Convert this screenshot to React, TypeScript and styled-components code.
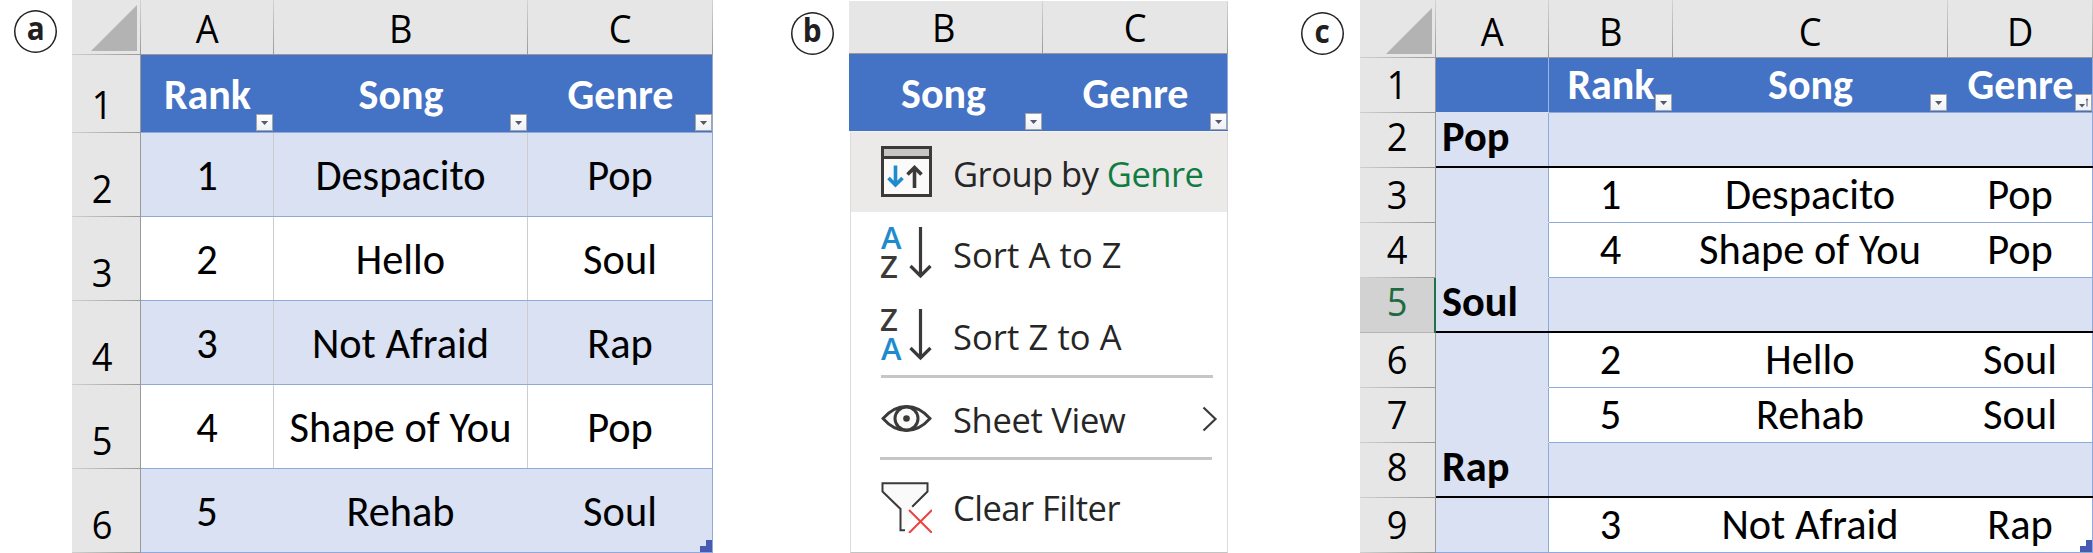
import React from "react";
import styled, { createGlobalStyle, css } from "styled-components";

const BLUE = "#4472c4";
const BAND = "#d9e1f2";
const RULE = "#8ea9db";
const HEAD = "#e6e6e6";
const EDGE = "#999999";

const Global = createGlobalStyle`
  *, *::before { box-sizing: border-box; }
  body { margin: 0; background: #fff; overflow: hidden; }
`;

const Page = styled.main`
  display: flex;
  align-items: flex-start;
  width: 2093px;
  height: 553px;
  overflow: hidden;
`;

const Badge = styled.div<{ $top: number; $left: number; $right: number; $lift: number }>`
  flex: none;
  width: 43px;
  height: 43px;
  margin: ${(p) => `${p.$top}px ${p.$right}px 0 ${p.$left}px`};
  padding-bottom: ${(p) => p.$lift}px;
  box-shadow: inset 0 0 0 1.5px #231f20;
  border-radius: 50%;
  display: flex;
  align-items: center;
  justify-content: center;
  font: 700 32px/32px "Open Sans", "Noto Sans", sans-serif;
  color: #231f20;
`;

const BadgeLetter = styled.span`
  display: block;
  transform: scaleX(0.93);
`;

const Sheet = styled.section<{ $cols: string; $rows: string }>`
  flex: none;
  display: grid;
  grid-template-columns: ${(p) => p.$cols};
  grid-template-rows: ${(p) => p.$rows};
`;

const Heading = styled.div`
  background: ${HEAD};
  display: flex;
  align-items: flex-end;
  justify-content: center;
  font: 400 39px/40px "Open Sans", "Noto Sans", sans-serif;
  color: #000;
`;

const Narrow = styled.span`
  display: block;
  transform: scaleX(0.93);
`;

const Corner = styled(Heading)<{ $pad: number }>`
  justify-content: flex-end;
  padding: 0 ${(p) => p.$pad}px 4px 0;
  background:
    linear-gradient(90deg, #cfcfcf, ${EDGE}) bottom / 100% 1px no-repeat,
    linear-gradient(#d4d4d4, ${EDGE}) right / 1px 100% no-repeat ${HEAD};
`;

const Triangle = styled.svg`
  display: block;
  width: 46px;
  height: 46px;
  fill: #b3b3b3;
`;

const ColHeading = styled(Heading)<{ $shift?: number }>`
  padding: 0 ${(p) => p.$shift ?? 1}px 7px 0;
  background:
    linear-gradient(${EDGE}, ${EDGE}) bottom / 100% 1px no-repeat,
    linear-gradient(#d4d4d4, ${EDGE}) right / 1px 100% no-repeat ${HEAD};
`;

const RowHeading = styled(Heading)<{ $shift?: number; $group?: boolean; $active?: boolean }>`
  padding-right: ${(p) => p.$shift ?? 0}px;
  padding-bottom: ${(p) => (p.$group ? 12 : 9)}px;
  border-right: 1px solid ${EDGE};
  background: linear-gradient(90deg, #cfcfcf, ${EDGE}) bottom / 100% 1px no-repeat ${HEAD};
  ${(p) =>
    p.$active &&
    css`
      color: #1e6b41;
      background: linear-gradient(#b4b4b4, #b4b4b4) bottom / 100% 1px no-repeat #d2d2d2;
      border-right: 2px solid #217346;
    `}
`;

const Cell = styled.div<{
  $base: number;
  $fill?: string;
  $right?: string;
  $bottom?: string;
  $thick?: boolean;
}>`
  position: relative;
  display: flex;
  align-items: flex-end;
  justify-content: center;
  background:
    linear-gradient(${(p) => p.$bottom ?? RULE} 0 0) bottom / 100% ${(p) => (p.$thick ? 2 : 1)}px no-repeat,
    linear-gradient(${(p) => p.$right ?? p.$fill ?? "#fff"} 0 0) right / 1px 100% no-repeat
    ${(p) => p.$fill ?? "#fff"};
  padding: 0 1px ${(p) => p.$base - 6}px 0;
  font: 400 42.4px/40px Calibri, Carlito, Lato, sans-serif;
  color: #000;
  white-space: nowrap;
`;

const HeaderCell = styled(Cell)<{ $shift?: number }>`
  padding-right: ${(p) => p.$shift ?? 0}px;
  font-size: 42px;
  font-weight: 700;
  color: #fff;
`;

const GroupCell = styled(Cell)`
  justify-content: flex-start;
  padding-left: 6px;
  font-weight: 700;
`;

const FilterButton = styled.span<{ $bottom: number }>`
  position: absolute;
  right: 1px;
  bottom: ${(p) => p.$bottom}px;
  width: 17px;
  height: 17px;
  border: 1px solid #a6a6a6;
  background: linear-gradient(#fff, #eef1f6);
  svg { display: block; width: 15px; height: 15px; }
`;

const Handle = styled.svg`
  position: absolute;
  right: 1px;
  bottom: 1px;
  width: 12px;
  height: 12px;
  fill: #485bb2;
`;

function Filter({ bottom = 2, sorted = false }: { bottom?: number; sorted?: boolean }) {
  return (
    <FilterButton $bottom={bottom}>
      <svg viewBox="0 0 15 15" fill="#555b66">
        {sorted ? (
          <>
            <path d="M3 9h6l-3 3.4z" />
            <path d="M10.5 4h1v7.500h-1zM9.500 5.200 11 3.200l1.500 2z" />
          </>
        ) : (
          <path d="M4 6h7.200L7.600 9.900z" />
        )}
      </svg>
    </FilterButton>
  );
}

const CornerMark = () => (
  <Triangle viewBox="0 0 46 46">
    <path d="M46 0V46H0z" />
  </Triangle>
);

const ResizeMark = () => (
  <Handle viewBox="0 0 12 12">
    <path d="M6 0h6v12H0V6h6z" />
  </Handle>
);

/* ---------- filter menu ---------- */

const MenuPanel = styled.section`
  flex: none;
  width: 379px;
  height: 553px;
  display: flex;
  flex-direction: column;
  padding-top: 1px;
`;

const Menu = styled.div`
  flex: 1;
  display: flex;
  flex-direction: column;
  margin: 0 0 0 1px;
  border: 1px solid #dcdcdc;
  border-top-color: #f3f3f3;
  border-bottom-color: #c3c3c3;
`;

const Item = styled.div<{ $h: number; $active?: boolean; $drop?: number; $foot?: number }>`
  flex: none;
  height: ${(p) => p.$h}px;
  display: flex;
  align-items: center;
  padding: ${(p) => p.$drop ?? 0}px 9px ${(p) => p.$foot ?? 0}px 30px;
  background: ${(p) => (p.$active ? "#ebeae9" : "transparent")};
  > svg { flex: none; display: block; }
`;

const Label = styled.span<{ $track?: number; $y?: number }>`
  flex: 1;
  margin: 0 0 0 21px;
  padding-top: ${(p) => p.$y ?? 0}px;
  font: 400 34.5px/44px "Open Sans", "Noto Sans", sans-serif;
  letter-spacing: ${(p) => p.$track ?? 0}px;
  white-space: nowrap;
  color: #262626;
  em { font-style: normal; color: #107c41; }
`;

const Divider = styled.hr<{ $left: number }>`
  flex: none;
  width: 332px;
  height: 3px;
  margin: 0 0 0 ${(p) => p.$left}px;
  border: 0;
  background: #c6c6c6;
`;

const INK = "#3b3a39";
const ACCENT = "#1e8bcd";

const GroupIcon = () => (
  <svg width="51" height="51" viewBox="0 0 51 51" fill="none">
    <rect x="1.500" y="1.500" width="48" height="48" fill="#fafafa" stroke={INK} strokeWidth="3" />
    <rect x="3" y="3" width="45" height="7" fill="#c8c6c4" />
    <path d="M2 11.500h47" stroke={INK} strokeWidth="3" />
    <path d="M14.500 19.500v19M7.500 32l7 7 7-7" stroke={ACCENT} strokeWidth="3.600" />
    <path d="M33.500 42V22M26.500 28.500l7-7 7 7" stroke={INK} strokeWidth="3.600" />
  </svg>
);

const SortSvg = styled.svg`
  overflow: visible;
`;

const Glyph = styled.text`
  font: 600 31px "Open Sans", "Noto Sans", sans-serif;
`;

function SortIcon({ first, second }: { first: "A" | "Z"; second: "A" | "Z" }) {
  const mark = (c: "A" | "Z", y: number) => (
    <Glyph x={c === "A" ? 0 : -1} y={y} fill={c === "A" ? ACCENT : INK}>
      {c}
    </Glyph>
  );
  return (
    <SortSvg width="51" height="51" viewBox="0 0 51 51" fill="none">
      {mark(first, 22.3)}
      {mark(second, 51)}
      <path d="M39.500 0v49M29.500 39l10 10 10-10" stroke={INK} strokeWidth="3.200" />
    </SortSvg>
  );
}

const EyeIcon = () => (
  <svg width="51" height="51" viewBox="0 0 51 51" fill="#fafafa" stroke={INK}>
    <path d="M2 25.500C16 9.500 35 9.500 49 25.500C35 41.500 16 41.500 2 25.500Z" strokeWidth="2.800" />
    <circle cx="25.500" cy="25.500" r="11.500" strokeWidth="3" />
    <circle cx="25.500" cy="25.500" r="3.300" fill={INK} stroke="none" />
  </svg>
);

const ClearIcon = () => (
  <svg width="51" height="51" viewBox="0 0 51 51" fill="none">
    <path d="M1 1.200H46.500V9.500L31 25v10l-7 13h-4.500V27L2 9.500z" fill="#fafafa" />
    <path d="M24 48.200H19.500V27L1.500 9.500V1.200H46.500V9.500L31.200 24.800" stroke={INK} strokeWidth="2" />
    <path d="M28 28l23 23M51 28 28 51" stroke="#f04040" strokeWidth="2" />
  </svg>
);

const Chevron = () => (
  <svg width="16" height="26" viewBox="0 0 16 26" fill="none" stroke={INK} strokeWidth="2.200">
    <path d="M1.500 1.500 13.500 13 1.500 24.500" />
  </svg>
);

/* ---------- data ---------- */

const SONGS = [
  ["1", "Despacito", "Pop"],
  ["2", "Hello", "Soul"],
  ["3", "Not Afraid", "Rap"],
  ["4", "Shape of You", "Pop"],
  ["5", "Rehab", "Soul"],
];

type GroupedRow = { group?: string; song?: string[] };
const GROUPED: GroupedRow[] = [
  { group: "Pop" },
  { song: SONGS[0] },
  { song: SONGS[3] },
  { group: "Soul" },
  { song: SONGS[1] },
  { song: SONGS[4] },
  { group: "Rap" },
  { song: SONGS[2] },
];

function PlainTable() {
  const titles = ["Rank", "Song", "Genre"];
  return (
    <Sheet $cols="69px 133px 254px 185px" $rows="55px 78px repeat(5, 84px)">
      <Corner $pad={4}><CornerMark /></Corner>
      {["A", "B", "C"].map((c) => (
        <ColHeading key={c}><Narrow>{c}</Narrow></ColHeading>
      ))}
      <RowHeading $shift={8}><Narrow>1</Narrow></RowHeading>
      {titles.map((t, i) => (
        <HeaderCell key={t} $base={24} $fill={BLUE} $right={i === 2 ? RULE : BLUE}>
          {t}
          <Filter />
        </HeaderCell>
      ))}
      {SONGS.map((row, r) => {
        const fill = r % 2 ? "#fff" : BAND;
        return (
          <React.Fragment key={r}>
            <RowHeading $shift={8}><Narrow>{r + 2}</Narrow></RowHeading>
            {row.map((v, i) => (
              <Cell key={i} $base={27} $fill={fill} $right={i === 2 ? RULE : r === 4 ? fill : "#cdcdcd"}>
                {v}
                {r === 4 && i === 2 && <ResizeMark />}
              </Cell>
            ))}
          </React.Fragment>
        );
      })}
    </Sheet>
  );
}

function FilterMenu() {
  return (
    <MenuPanel>
      <Sheet $cols="194px 185px" $rows="53px 77px">
        <ColHeading $shift={5}><Narrow>B</Narrow></ColHeading>
        <ColHeading><Narrow>C</Narrow></ColHeading>
        <HeaderCell $base={23} $fill={BLUE} $bottom={BLUE} $shift={5}>Song<Filter bottom={1} /></HeaderCell>
        <HeaderCell $base={23} $fill={BLUE} $bottom={BLUE} $right={RULE}>Genre<Filter bottom={1} /></HeaderCell>
      </Sheet>
      <Menu>
        <Item $h={80} $foot={1} $active>
          <GroupIcon />
          <Label $track={-0.52} $y={4}>Group by <em>Genre</em></Label>
        </Item>
        <Item $h={82} $foot={1}>
          <SortIcon first="A" second="Z" />
          <Label $track={0.1} $y={5}>Sort A to Z</Label>
        </Item>
        <Item $h={81}>
          <SortIcon first="Z" second="A" />
          <Label $track={0.1} $y={4}>Sort Z to A</Label>
        </Item>
        <Divider $left={30} />
        <Item $h={79} $drop={2}>
          <EyeIcon />
          <Label $track={-0.3} $y={3}>Sheet View</Label>
          <Chevron />
        </Item>
        <Divider $left={29} />
        <Item $h={88} $drop={9} $foot={2}>
          <ClearIcon />
          <Label $track={-0.5}>Clear Filter</Label>
        </Item>
      </Menu>
    </MenuPanel>
  );
}

function GroupedTable() {
  return (
    <Sheet $cols="76px 113px 124px 275px 145px" $rows="58px repeat(9, 55px)">
      <Corner $pad={4}><CornerMark /></Corner>
      {["A", "B", "C", "D"].map((c) => (
        <ColHeading key={c}><Narrow>{c}</Narrow></ColHeading>
      ))}
      <RowHeading><Narrow>1</Narrow></RowHeading>
      <HeaderCell $base={14} $fill={BLUE} $right="#9db4e0" $bottom={BAND} />
      <HeaderCell $base={14} $fill={BLUE}>Rank<Filter /></HeaderCell>
      <HeaderCell $base={14} $fill={BLUE}>Song<Filter /></HeaderCell>
      <HeaderCell $base={14} $fill={BLUE} $right={RULE}>Genre<Filter sorted /></HeaderCell>
      {GROUPED.map(({ group, song }, r) => {
        const edge = group ? "#000" : RULE;
        const fill = group ? BAND : "#fff";
        return (
          <React.Fragment key={r}>
            <RowHeading $group={!!group} $active={group === "Soul"}><Narrow>{r + 2}</Narrow></RowHeading>
            <GroupCell $base={17} $fill={BAND} $right={RULE} $thick={!!group} $bottom={group ? "#000" : r === 7 ? RULE : BAND}>
              {group}
            </GroupCell>
            {[0, 1, 2].map((i) => (
              <Cell key={i} $base={14} $fill={fill} $right={i === 2 ? RULE : fill} $thick={!!group} $bottom={edge}>
                {song?.[i]}
                {r === 7 && i === 2 && <ResizeMark />}
              </Cell>
            ))}
          </React.Fragment>
        );
      })}
    </Sheet>
  );
}

export default function App() {
  return (
    <>
      <Global />
      <Page>
        <Badge $top={10} $left={14} $right={15} $lift={7}><BadgeLetter>a</BadgeLetter></Badge>
        <PlainTable />
        <Badge $top={12} $left={78} $right={15} $lift={7}><BadgeLetter>b</BadgeLetter></Badge>
        <FilterMenu />
        <Badge $top={12} $left={73} $right={16} $lift={5}><BadgeLetter>c</BadgeLetter></Badge>
        <GroupedTable />
      </Page>
    </>
  );
}
